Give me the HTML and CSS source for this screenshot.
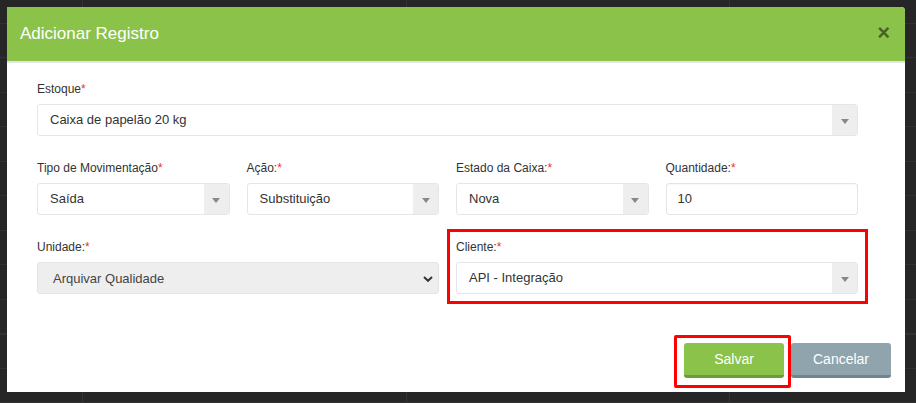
FILE: index.html
```html
<!DOCTYPE html>
<html lang="pt-BR">
<head>
<meta charset="utf-8">
<title>Adicionar Registro</title>
<link rel="stylesheet" href="styles.css">
</head>
<body class="page">
  <div class="modal">
    <div class="modal-header">
      <h4 class="modal-title">Adicionar Registro</h4>
      <button class="close" type="button">&times;</button>
    </div>
    <div class="modal-body">
      <div class="field">
        <label class="label">Estoque<span class="req">*</span></label>
        <div class="select">
          <span class="select-value">Caixa de papelão 20 kg</span>
          <span class="select-arrow"><span class="caret"></span></span>
        </div>
      </div>
      <div class="grid4">
        <div class="field">
          <label class="label">Tipo de Movimentação<span class="req">*</span></label>
          <div class="select">
            <span class="select-value">Saída</span>
            <span class="select-arrow"><span class="caret"></span></span>
          </div>
        </div>
        <div class="field">
          <label class="label">Ação:<span class="req">*</span></label>
          <div class="select">
            <span class="select-value">Substituição</span>
            <span class="select-arrow"><span class="caret"></span></span>
          </div>
        </div>
        <div class="field">
          <label class="label">Estado da Caixa:<span class="req">*</span></label>
          <div class="select">
            <span class="select-value">Nova</span>
            <span class="select-arrow"><span class="caret"></span></span>
          </div>
        </div>
        <div class="field">
          <label class="label">Quantidade:<span class="req">*</span></label>
          <div class="input">10</div>
        </div>
      </div>
      <div class="grid2">
        <div class="field last">
          <label class="label">Unidade:<span class="req">*</span></label>
          <div class="native-select">
            <span class="native-value">Arquivar Qualidade</span>
            <svg class="chevron" width="10" height="6" viewBox="0 0 10 6"><path d="M1 1 L5 4.8 L9 1" fill="none" stroke="#333" stroke-width="2"/></svg>
          </div>
        </div>
        <div class="field last highlight">
          <label class="label">Cliente:<span class="req">*</span></label>
          <div class="select">
            <span class="select-value">API - Integração</span>
            <span class="select-arrow"><span class="caret"></span></span>
          </div>
        </div>
      </div>
    </div>
    <div class="modal-footer">
      <button class="btn btn-save highlight-btn" type="button">Salvar</button>
      <button class="btn btn-cancel" type="button">Cancelar</button>
    </div>
  </div>
</body>
</html>
```
FILE: styles.css
```css
.page {
  margin: 0;
  width: 916px;
  height: 403px;
  overflow: hidden;
  font-family: "Liberation Sans", Arial, sans-serif;
  background-color: #262626;
  background-image:
    linear-gradient(to right, transparent 82px, #343434 82px, #343434 83px, transparent 83px, transparent 406px, #343434 406px, #343434 407px, transparent 407px, transparent 729px, #343434 729px, #343434 730px, transparent 730px),
    repeating-linear-gradient(to bottom, transparent 0, transparent 23px, #323232 23px, #323232 24px, transparent 24px, transparent 34.5px);
}

.modal {
  margin: 7px 0 0 7px;
  width: 898px;
  height: 385px;
  background: #fff;
  border-radius: 0 4px 0 0;
  display: flex;
  flex-direction: column;
}

.modal-header {
  height: 54px;
  background: #8bc34a;
  border-bottom: 2px solid #e5e5e5;
  border-radius: 0 4px 0 0;
  display: flex;
  align-items: center;
  justify-content: space-between;
  padding: 0 15px 0 13px;
}

.modal-title {
  margin: 0;
  font-size: 17px;
  font-weight: normal;
  line-height: 20px;
  color: #fff;
}

.close {
  background: none;
  border: 0;
  padding: 0;
  font-family: "Liberation Sans", Arial, sans-serif;
  font-size: 22px;
  font-weight: bold;
  line-height: 1;
  color: rgba(0, 0, 0, 0.5);
  margin-top: -2px;
}

.modal-body {
  padding: 18px 47px 0 30px;
}

.field {
  position: relative;
  margin-bottom: 24px;
}

.field.last {
  margin-bottom: 0;
}

.label {
  display: block;
  font-size: 12px;
  line-height: 17px;
  margin-bottom: 6px;
  color: #333;
}

.req {
  color: #f0312f;
}

.select {
  display: flex;
  height: 32px;
  box-sizing: border-box;
  border: 1px solid #e3e6ea;
  border-radius: 3px;
  background: #fff;
  overflow: hidden;
}

.select-value {
  flex: 1;
  padding-left: 12px;
  font-size: 13px;
  line-height: 30px;
  color: #333;
  white-space: nowrap;
}

.select-arrow {
  width: 25px;
  background: #eeeeee;
  display: flex;
  align-items: center;
  justify-content: center;
  padding-top: 3px;
  box-sizing: border-box;
}

.caret {
  width: 0;
  height: 0;
  border-left: 4px solid transparent;
  border-right: 4px solid transparent;
  border-top: 5px solid #888;
}

.input {
  height: 32px;
  box-sizing: border-box;
  border: 1px solid #e1e5e8;
  border-radius: 3px;
  box-shadow: inset 0 1px 1px rgba(0, 0, 0, 0.03);
  padding-left: 11px;
  font-size: 13px;
  line-height: 30px;
  color: #333;
}

.grid4 {
  display: grid;
  grid-template-columns: repeat(4, 1fr);
  column-gap: 17px;
}

.grid2 {
  display: grid;
  grid-template-columns: 1fr 1fr;
  column-gap: 17px;
}

.native-select {
  display: flex;
  align-items: center;
  height: 32px;
  box-sizing: border-box;
  border: 1px solid #e4e4e4;
  border-radius: 3px;
  background: #eeeeee;
  padding: 0 5px 0 15px;
}

.native-value {
  flex: 1;
  font-size: 13px;
  color: #444;
}

.chevron {
  display: block;
  margin-top: 1px;
}

.highlight::after {
  content: "";
  position: absolute;
  top: -10px;
  left: -9px;
  right: -10px;
  bottom: -10px;
  border: 3px solid #ff0000;
  pointer-events: none;
}

.modal-footer {
  display: flex;
  justify-content: flex-end;
  gap: 7px;
  padding: 49px 14px 14px;
}

.btn {
  position: relative;
  width: 100px;
  height: 35px;
  box-sizing: border-box;
  border: 0;
  border-bottom: 3px solid;
  border-radius: 3px;
  font-family: "Liberation Sans", Arial, sans-serif;
  font-size: 14px;
  color: #fff;
  padding: 0;
  line-height: 32px;
}

.btn-save {
  background: #8bc34a;
  border-bottom-color: #6e9b3a;
}

.btn-cancel {
  background: #90a4ae;
  border-bottom-color: #6f858f;
}

.highlight-btn::after {
  content: "";
  position: absolute;
  top: -8px;
  left: -10px;
  right: -7px;
  bottom: -13px;
  border: 3px solid #ff0000;
  border-radius: 2px;
  pointer-events: none;
}
```
